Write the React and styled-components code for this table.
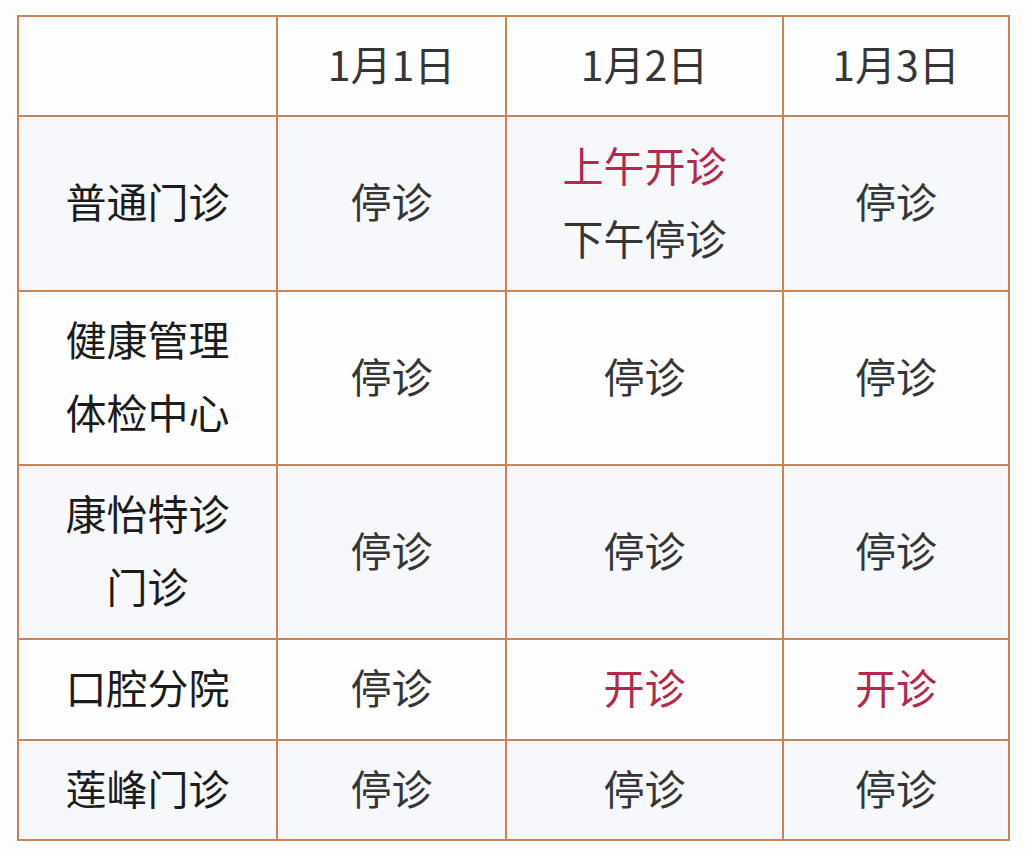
import React from "react";
import styled, { createGlobalStyle } from "styled-components";

const Global = createGlobalStyle`
  html, body { margin: 0; padding: 0; background: #fdfdfd; }
  body { font-family: "Noto Sans CJK SC", "Noto Sans", sans-serif; }
`;

const Page = styled.div`
  padding: 15px 0 0 17px;
`;

const Table = styled.table`
  border-collapse: collapse;
  table-layout: fixed;
  width: 991px;
`;

const Row = styled.tr`
  height: ${(p) => p.$h}px;
  background: ${(p) => (p.$tint ? "#f6f8fc" : "#fefefe")};
`;

const Cell = styled.td`
  border: 2px solid #c78559;
  text-align: center;
  vertical-align: middle;
  padding: 0 0 6px 0;
  font-size: 41px;
  line-height: 73px;
  color: ${(p) => (p.$label ? "#1c1c1c" : "#363636")};
`;

const Open = styled.span`
  color: #b3284b;
`;

const Line = styled.div``;

const widths = [259, 229, 277, 226];

const rows = [
  { h: 100, tint: false, label: [""], cells: [["1月1日"], ["1月2日"], ["1月3日"]] },
  { h: 175, tint: true, label: ["普通门诊"], cells: [["停诊"], [["open", "上午开诊"], "下午停诊"], ["停诊"]] },
  { h: 174, tint: false, label: ["健康管理", "体检中心"], cells: [["停诊"], ["停诊"], ["停诊"]] },
  { h: 174, tint: true, label: ["康怡特诊", "门诊"], cells: [["停诊"], ["停诊"], ["停诊"]] },
  { h: 101, tint: false, label: ["口腔分院"], cells: [["停诊"], [["open", "开诊"]], [["open", "开诊"]]] },
  { h: 100, tint: true, label: ["莲峰门诊"], cells: [["停诊"], ["停诊"], ["停诊"]] },
];

const renderLine = (l, i) =>
  Array.isArray(l) ? (
    <Line key={i}>
      <Open>{l[1]}</Open>
    </Line>
  ) : (
    <Line key={i}>{l}</Line>
  );

export default function App() {
  return (
    <>
      <Global />
      <Page>
        <Table>
          <colgroup>
            {widths.map((w, i) => (
              <col key={i} style={{ width: w }} />
            ))}
          </colgroup>
          <tbody>
            {rows.map((r, ri) => (
              <Row key={ri} $h={r.h} $tint={r.tint}>
                <Cell $label>{r.label.map(renderLine)}</Cell>
                {r.cells.map((c, ci) => (
                  <Cell key={ci}>{c.map(renderLine)}</Cell>
                ))}
              </Row>
            ))}
          </tbody>
        </Table>
      </Page>
    </>
  );
}
